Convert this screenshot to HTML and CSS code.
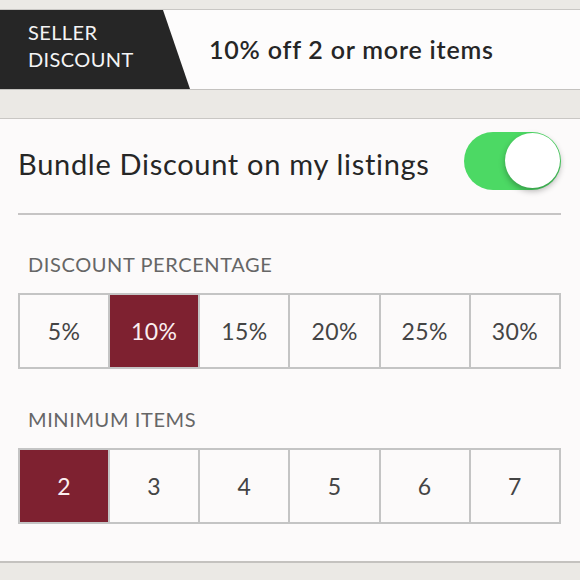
FILE: index.html
```html
<!DOCTYPE html>
<html lang="en">
<head>
    <meta charset="UTF-8">
    <meta name="viewport" content="width=device-width, initial-scale=1.0">
    <link rel="stylesheet" href="styles.css">
    <title>Bundle Discount</title>
</head>
<body>
    <div class="banner">
        <div class="badge">SELLER<br>DISCOUNT</div>
        <div class="banner-text">10% off 2 or more items</div>
    </div>

    <div class="card">
        <div class="toggle-row">
            <span class="toggle-label">Bundle Discount on my listings</span>
            <div class="toggle on"><div class="knob"></div></div>
        </div>

        <div class="section">
            <div class="section-label">DISCOUNT PERCENTAGE</div>
            <div class="choices">
                <div class="choice">5%</div>
                <div class="choice selected">10%</div>
                <div class="choice">15%</div>
                <div class="choice">20%</div>
                <div class="choice">25%</div>
                <div class="choice">30%</div>
            </div>
        </div>

        <div class="section">
            <div class="section-label">MINIMUM ITEMS</div>
            <div class="choices">
                <div class="choice selected">2</div>
                <div class="choice">3</div>
                <div class="choice">4</div>
                <div class="choice">5</div>
                <div class="choice">6</div>
                <div class="choice">7</div>
            </div>
        </div>
    </div>
</body>
</html>
```

FILE: styles.css
```css
body {
    margin: 0;
    padding-top: 9px;
    background-color: #ebe9e5;
    font-family: Lato, "Open Sans", sans-serif;
    color: #2b2b2b;
    height: 571px;
}

.banner {
    display: flex;
    align-items: center;
    height: 79px;
    background-color: #fdfcfc;
    border-top: 1px solid #c9c7c4;
    border-bottom: 1px solid #c4c2bf;
}

.badge {
    height: 100%;
    width: 190px;
    box-sizing: border-box;
    padding: 9px 0 0 28px;
    background-color: #262626;
    color: #f4f4f4;
    font-size: 20px;
    line-height: 27px;
    letter-spacing: 0.4px;
    clip-path: polygon(0 0, 163px 0, 190px 100%, 0 100%);
}

.banner-text {
    margin-left: 19px;
    margin-bottom: 2px;
    font-size: 25px;
    font-weight: 600;
    color: #262626;
    letter-spacing: 0.8px;
}

.card {
    margin-top: 28px;
    background-color: #fcfafa;
    border-top: 1px solid #c9c7c4;
    border-bottom: 2px solid #c4c2bf;
    padding: 0 19px 37px 18px;
}

.toggle-row {
    display: flex;
    align-items: center;
    justify-content: space-between;
    padding: 13px 0 23px 0;
    border-bottom: 2px solid #c6c4c4;
}

.toggle-label {
    margin-top: 4px;
    font-size: 29px;
    letter-spacing: 0.7px;
    color: #262626;
}

.toggle {
    position: relative;
    width: 97px;
    height: 58px;
    border-radius: 29px;
    background-color: #4cd964;
}

.knob {
    position: absolute;
    top: 1px;
    right: 1px;
    width: 55px;
    height: 55px;
    border-radius: 50%;
    background-color: #fff;
    box-shadow: 0 3px 6px rgba(0, 0, 0, 0.3);
}

.section {
    padding-top: 37px;
}

.section + .section {
    padding-top: 38px;
}

.section-label {
    margin-left: 10px;
    font-size: 20px;
    line-height: 24px;
    letter-spacing: 0.6px;
    color: #666;
    margin-bottom: 17px;
}

.choices {
    display: grid;
    grid-template-columns: repeat(6, 1fr);
    gap: 2px;
    padding: 2px;
    background-color: #c4c4c4;
}

.choice {
    height: 72px;
    display: flex;
    align-items: center;
    justify-content: center;
    background-color: #fcfafa;
    font-size: 23px;
    letter-spacing: 0.4px;
    color: #444;
}

.choice.selected {
    background-color: #7e2130;
    color: #fbeff0;
}
```
